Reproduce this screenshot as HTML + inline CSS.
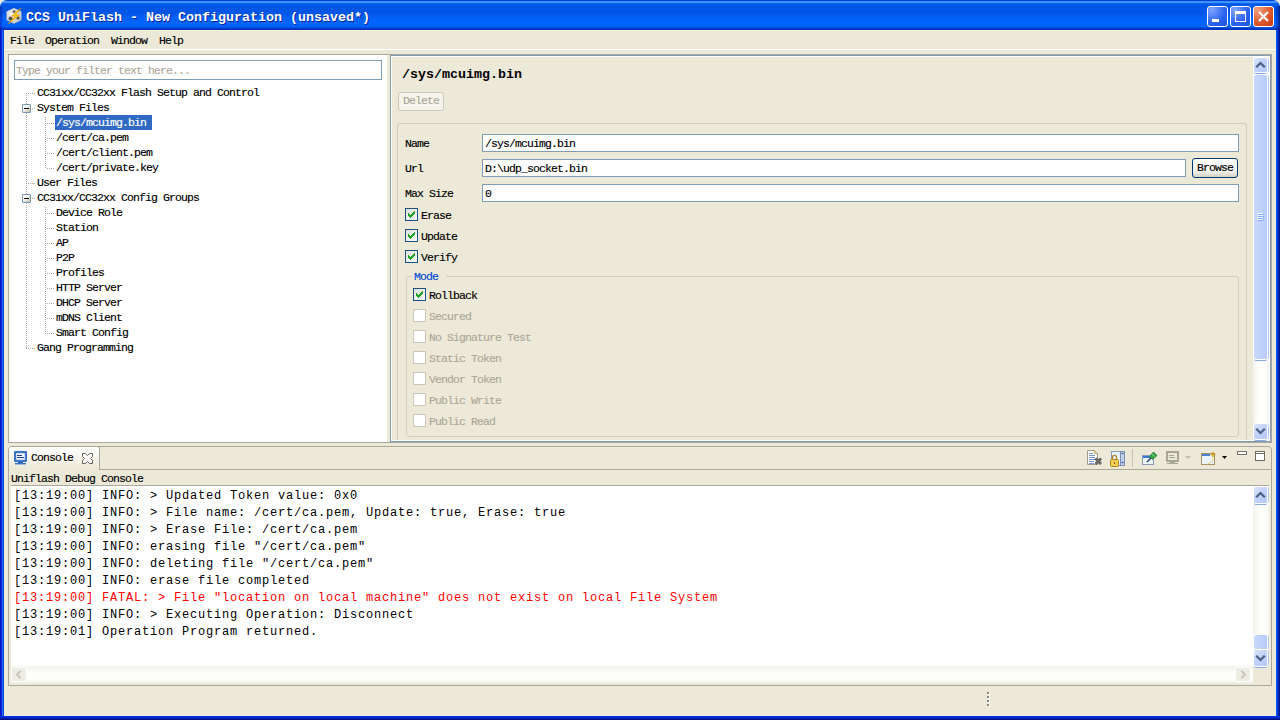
<!DOCTYPE html>
<html><head><meta charset="utf-8">
<style>
*{margin:0;padding:0;box-sizing:border-box}
html,body{width:1280px;height:720px;overflow:hidden;background:#ece9d8}
body{position:relative;font-family:"Liberation Mono",monospace;font-size:12px;color:#000}
.a{position:absolute}
.t{position:absolute;white-space:pre;font-family:"Liberation Mono",monospace;font-size:11.5px;letter-spacing:-0.9px;line-height:15px;height:15px;-webkit-text-stroke:0.15px currentColor;margin-top:-2px}
.c{position:absolute;white-space:pre;font-family:"Liberation Mono",monospace;font-size:12px;letter-spacing:0.8px;line-height:17px;left:14px}
</style></head><body>
<!-- window frame -->
<div class="a" style="left:0;top:0;width:8px;height:8px;background:#e8e8e4"></div>
<div class="a" style="left:1272px;top:0;width:8px;height:8px;background:#e8e8e4"></div>
<div class="a" style="left:0;top:0;width:1280px;height:30px;background:linear-gradient(180deg,#0040d8 0,#0040d8 1px,#3d95ff 1px,#3d95ff 3px,#0a6cff 3px,#0058e6 4px,#0054e4 13px,#005ef0 16px,#0066ff 22px,#0062fa 27px,#003dd0 28px,#0032b8 30px);border-radius:7px 7px 0 0"></div>
<div class="a" style="left:0;top:30px;width:4px;height:690px;background:linear-gradient(90deg,#0014c8 0 1px,#0024d8 1px 2px,#2c6cf4 2px 3px,#0042e4 3px)"></div>
<div class="a" style="left:1276px;top:30px;width:4px;height:690px;background:linear-gradient(90deg,#0050f8 0 1px,#0040e0 1px 2px,#002ab0 2px 3px,#001488 3px)"></div>
<div class="a" style="left:0;top:716px;width:1280px;height:4px;background:linear-gradient(180deg,#0036f0,#0026d0 40%,#001a98 70%,#000a70)"></div>
<div class="a" style="left:4px;top:30px;width:1272px;height:1px;background:#f8f0d0"></div>

<div class="a" style="left:1275px;top:6px;width:5px;height:24px;background:linear-gradient(90deg,rgba(0,10,110,0) 0,rgba(0,10,110,.25) 2px,rgba(0,10,110,.55) 4px,rgba(0,10,110,.7))"></div>
<div class="a" style="left:0;top:6px;width:3px;height:24px;background:linear-gradient(90deg,rgba(0,10,160,.45),rgba(0,10,160,.2) 2px,rgba(0,10,160,0))"></div>
<!-- title -->
<svg class="a" style="left:5px;top:6px" width="18" height="19"><defs><radialGradient id="cube" cx="0.4" cy="0.4" r="0.7"><stop offset="0" stop-color="#fafafa"/><stop offset="1" stop-color="#bcbcbc"/></radialGradient></defs><path d="M9 2L16.5 5.5V14L9 17.8L1.5 14V5.5Z" fill="url(#cube)"/><circle cx="5.5" cy="12.5" r="2" fill="#505050"/><circle cx="13" cy="12" r="1.8" fill="#606060"/><circle cx="9" cy="5.5" r="1.6" fill="#707070"/><path d="M16 2L6.5 10L10 10.6L3 18L14.5 9.2L11 8.5Z" fill="#f9c514" stroke="#e0a000" stroke-width="0.6"/></svg>

<div class="a" style="left:26px;top:8px;white-space:pre;font-family:'Liberation Mono',monospace;font-weight:bold;font-size:13.333px;line-height:20px;color:#fff;text-shadow:1px 1px 0 #0a1e9e">CCS UniFlash - New Configuration (unsaved*)</div>

<!-- title buttons -->
<div class="a" style="left:1207px;top:6px;width:21px;height:21px;border:1px solid #fff;border-radius:3px;background:radial-gradient(circle at 20% 15%,#7ea5ff,#2a63f0 60%,#1c4fd8)"></div>
<div class="a" style="left:1212px;top:19px;width:7px;height:3px;background:#fff"></div>
<div class="a" style="left:1230px;top:6px;width:21px;height:21px;border:1px solid #fff;border-radius:3px;background:radial-gradient(circle at 20% 15%,#7ea5ff,#2a63f0 60%,#1c4fd8)"></div>
<div class="a" style="left:1235px;top:11px;width:11px;height:11px;border:1px solid #fff;border-top-width:3px"></div>
<div class="a" style="left:1253px;top:6px;width:21px;height:21px;border:1px solid #fff;border-radius:3px;background:radial-gradient(circle at 20% 15%,#f0a080,#e05a30 55%,#c83a10)"></div>
<svg class="a" style="left:1253px;top:6px" width="21" height="21"><path d="M6 6 L15 15 M15 6 L6 15" stroke="#fff" stroke-width="2.2"/></svg>

<!-- menu -->
<div class="t" style="left:10px;top:35px">File</div>
<div class="t" style="left:45px;top:35px">Operation</div>
<div class="t" style="left:111px;top:35px">Window</div>
<div class="t" style="left:159px;top:35px">Help</div>
<div class="a" style="left:4px;top:49px;width:1272px;height:1px;background:#fff"></div>

<!-- left panel -->
<div class="a" style="left:8px;top:54px;width:1264px;height:389px;border:1px solid #aca899;background:#ece9d8"></div>
<div class="a" style="left:9px;top:55px;width:378px;height:387px;background:#fff"></div>
<div class="a" style="left:14px;top:60px;width:368px;height:20px;border:1px solid #7f9db9;background:#fff"></div>
<div class="t" style="left:16px;top:65px;color:#aca899">Type your filter text here...</div>

<div class="a" style="left:26px;top:93px;width:1px;height:256px;background:repeating-linear-gradient(180deg,#aca899 0 1px,transparent 1px 2px)"></div>
<div class="a" style="left:26px;top:93px;width:9px;height:1px;background:repeating-linear-gradient(90deg,#aca899 0 1px,transparent 1px 2px)"></div>
<div class="a" style="left:32px;top:108px;width:3px;height:1px;background:repeating-linear-gradient(90deg,#aca899 0 1px,transparent 1px 2px)"></div>
<div class="a" style="left:26px;top:183px;width:9px;height:1px;background:repeating-linear-gradient(90deg,#aca899 0 1px,transparent 1px 2px)"></div>
<div class="a" style="left:32px;top:198px;width:3px;height:1px;background:repeating-linear-gradient(90deg,#aca899 0 1px,transparent 1px 2px)"></div>
<div class="a" style="left:26px;top:348px;width:9px;height:1px;background:repeating-linear-gradient(90deg,#aca899 0 1px,transparent 1px 2px)"></div>
<div class="a" style="left:45px;top:117px;width:1px;height:52px;background:repeating-linear-gradient(180deg,#aca899 0 1px,transparent 1px 2px)"></div>
<div class="a" style="left:45px;top:207px;width:1px;height:127px;background:repeating-linear-gradient(180deg,#aca899 0 1px,transparent 1px 2px)"></div>
<div class="a" style="left:47px;top:123px;width:7px;height:1px;background:repeating-linear-gradient(90deg,#aca899 0 1px,transparent 1px 2px)"></div>
<div class="a" style="left:47px;top:138px;width:7px;height:1px;background:repeating-linear-gradient(90deg,#aca899 0 1px,transparent 1px 2px)"></div>
<div class="a" style="left:47px;top:153px;width:7px;height:1px;background:repeating-linear-gradient(90deg,#aca899 0 1px,transparent 1px 2px)"></div>
<div class="a" style="left:47px;top:168px;width:7px;height:1px;background:repeating-linear-gradient(90deg,#aca899 0 1px,transparent 1px 2px)"></div>
<div class="a" style="left:47px;top:213px;width:7px;height:1px;background:repeating-linear-gradient(90deg,#aca899 0 1px,transparent 1px 2px)"></div>
<div class="a" style="left:47px;top:228px;width:7px;height:1px;background:repeating-linear-gradient(90deg,#aca899 0 1px,transparent 1px 2px)"></div>
<div class="a" style="left:47px;top:243px;width:7px;height:1px;background:repeating-linear-gradient(90deg,#aca899 0 1px,transparent 1px 2px)"></div>
<div class="a" style="left:47px;top:258px;width:7px;height:1px;background:repeating-linear-gradient(90deg,#aca899 0 1px,transparent 1px 2px)"></div>
<div class="a" style="left:47px;top:273px;width:7px;height:1px;background:repeating-linear-gradient(90deg,#aca899 0 1px,transparent 1px 2px)"></div>
<div class="a" style="left:47px;top:288px;width:7px;height:1px;background:repeating-linear-gradient(90deg,#aca899 0 1px,transparent 1px 2px)"></div>
<div class="a" style="left:47px;top:303px;width:7px;height:1px;background:repeating-linear-gradient(90deg,#aca899 0 1px,transparent 1px 2px)"></div>
<div class="a" style="left:47px;top:318px;width:7px;height:1px;background:repeating-linear-gradient(90deg,#aca899 0 1px,transparent 1px 2px)"></div>
<div class="a" style="left:47px;top:333px;width:7px;height:1px;background:repeating-linear-gradient(90deg,#aca899 0 1px,transparent 1px 2px)"></div>
<div class="a" style="left:22px;top:104px;width:9px;height:9px;border:1px solid #7898b5;border-radius:1px;background:linear-gradient(135deg,#fff 30%,#c4bfa9)"></div>
<div class="a" style="left:24px;top:108px;width:5px;height:1px;background:#000"></div>
<div class="a" style="left:22px;top:194px;width:9px;height:9px;border:1px solid #7898b5;border-radius:1px;background:linear-gradient(135deg,#fff 30%,#c4bfa9)"></div>
<div class="a" style="left:24px;top:198px;width:5px;height:1px;background:#000"></div>
<div class="t" style="left:37px;top:87px">CC31xx/CC32xx Flash Setup and Control</div>
<div class="t" style="left:37px;top:102px">System Files</div>
<div class="a" style="left:55px;top:115px;width:97px;height:15px;background:#316ac5"></div>
<div class="t" style="left:56px;top:117px;color:#fff">/sys/mcuimg.bin</div>
<div class="t" style="left:56px;top:132px">/cert/ca.pem</div>
<div class="t" style="left:56px;top:147px">/cert/client.pem</div>
<div class="t" style="left:56px;top:162px">/cert/private.key</div>
<div class="t" style="left:37px;top:177px">User Files</div>
<div class="t" style="left:37px;top:192px">CC31xx/CC32xx Config Groups</div>
<div class="t" style="left:56px;top:207px">Device Role</div>
<div class="t" style="left:56px;top:222px">Station</div>
<div class="t" style="left:56px;top:237px">AP</div>
<div class="t" style="left:56px;top:252px">P2P</div>
<div class="t" style="left:56px;top:267px">Profiles</div>
<div class="t" style="left:56px;top:282px">HTTP Server</div>
<div class="t" style="left:56px;top:297px">DHCP Server</div>
<div class="t" style="left:56px;top:312px">mDNS Client</div>
<div class="t" style="left:56px;top:327px">Smart Config</div>
<div class="t" style="left:37px;top:342px">Gang Programming</div>
<!-- right panel -->
<div class="a" style="left:390px;top:55px;width:881px;height:387px;border:1px solid #7f9db9;background:#ece9d8;box-shadow:inset 1px 1px 0 #fff,inset -1px -1px 0 #fff;overflow:hidden"></div>

<svg width="0" height="0" style="position:absolute"><defs><linearGradient id="cg" x1="0" y1="0" x2="1" y2="1"><stop offset="0" stop-color="#dcdcd7"/><stop offset="1" stop-color="#fff"/></linearGradient></defs></svg>
<div class="a" style="left:402px;top:66px;white-space:pre;font-family:'Liberation Mono',monospace;font-weight:bold;font-size:13.333px;line-height:17px">/sys/mcuimg.bin</div>
<div class="a" style="left:398px;top:92px;width:46px;height:19px;border:1px solid #cac8bb;border-radius:3px;background:#f5f4ea"></div>
<div class="t" style="left:403px;top:95px;color:#aca899">Delete</div>
<div class="a" style="left:397px;top:123px;width:850px;height:317px;border:1px solid #d0d0bf;border-bottom:0;border-radius:3px 3px 0 0"></div>
<div class="t" style="left:405px;top:138px">Name</div>
<div class="a" style="left:482px;top:134px;width:757px;height:18px;border:1px solid #7f9db9;background:#fff"></div>
<div class="t" style="left:485px;top:138px">/sys/mcuimg.bin</div>
<div class="t" style="left:405px;top:163px">Url</div>
<div class="a" style="left:482px;top:159px;width:704px;height:18px;border:1px solid #7f9db9;background:#fff"></div>
<div class="t" style="left:485px;top:163px">D:\udp_socket.bin</div>
<div class="t" style="left:405px;top:188px">Max Size</div>
<div class="a" style="left:482px;top:184px;width:757px;height:18px;border:1px solid #7f9db9;background:#fff"></div>
<div class="t" style="left:485px;top:188px">0</div>
<div class="a" style="left:1192px;top:158px;width:46px;height:20px;border:1px solid #003c74;border-radius:3px;background:linear-gradient(180deg,#fff,#f0f0ea 70%,#d6d0c5)"></div>
<div class="t" style="left:1197px;top:162px">Browse</div>
<svg class="a" style="left:405px;top:208px" width="13" height="13"><rect x="0.5" y="0.5" width="12" height="12" fill="url(#cg)" stroke="#1c5180"/><path d="M3 5h1v1h1v1h1v-1h1v-1h1v-1h1v-1h1v3h-1v1h-1v1h-1v1h-1v1h-1v-1h-1v-1h-1z" fill="#21a121"/></svg>
<div class="t" style="left:421px;top:210px">Erase</div>
<svg class="a" style="left:405px;top:229px" width="13" height="13"><rect x="0.5" y="0.5" width="12" height="12" fill="url(#cg)" stroke="#1c5180"/><path d="M3 5h1v1h1v1h1v-1h1v-1h1v-1h1v-1h1v3h-1v1h-1v1h-1v1h-1v1h-1v-1h-1v-1h-1z" fill="#21a121"/></svg>
<div class="t" style="left:421px;top:231px">Update</div>
<svg class="a" style="left:405px;top:250px" width="13" height="13"><rect x="0.5" y="0.5" width="12" height="12" fill="url(#cg)" stroke="#1c5180"/><path d="M3 5h1v1h1v1h1v-1h1v-1h1v-1h1v-1h1v3h-1v1h-1v1h-1v1h-1v1h-1v-1h-1v-1h-1z" fill="#21a121"/></svg>
<div class="t" style="left:421px;top:252px">Verify</div>
<div class="a" style="left:406px;top:276px;width:833px;height:161px;border:1px solid #d0d0bf;border-radius:3px"></div>
<div class="a" style="left:412px;top:270px;width:34px;height:12px;background:#ece9d8"></div>
<div class="t" style="left:414px;top:271px;color:#0046d5">Mode</div>
<svg class="a" style="left:413px;top:288px" width="13" height="13"><rect x="0.5" y="0.5" width="12" height="12" fill="url(#cg)" stroke="#1c5180"/><path d="M3 5h1v1h1v1h1v-1h1v-1h1v-1h1v-1h1v3h-1v1h-1v1h-1v1h-1v1h-1v-1h-1v-1h-1z" fill="#21a121"/></svg>
<div class="t" style="left:429px;top:290px">Rollback</div>
<div class="a" style="left:413px;top:309px;width:13px;height:13px;border:1px solid #cac8bb;background:#fff"></div>
<div class="t" style="left:429px;top:311px;color:#aca899">Secured</div>
<div class="a" style="left:413px;top:330px;width:13px;height:13px;border:1px solid #cac8bb;background:#fff"></div>
<div class="t" style="left:429px;top:332px;color:#aca899">No Signature Test</div>
<div class="a" style="left:413px;top:351px;width:13px;height:13px;border:1px solid #cac8bb;background:#fff"></div>
<div class="t" style="left:429px;top:353px;color:#aca899">Static Token</div>
<div class="a" style="left:413px;top:372px;width:13px;height:13px;border:1px solid #cac8bb;background:#fff"></div>
<div class="t" style="left:429px;top:374px;color:#aca899">Vendor Token</div>
<div class="a" style="left:413px;top:393px;width:13px;height:13px;border:1px solid #cac8bb;background:#fff"></div>
<div class="t" style="left:429px;top:395px;color:#aca899">Public Write</div>
<div class="a" style="left:413px;top:414px;width:13px;height:13px;border:1px solid #cac8bb;background:#fff"></div>
<div class="t" style="left:429px;top:416px;color:#aca899">Public Read</div>
<div class="a" style="left:1253px;top:57px;width:16px;height:383px;background:linear-gradient(90deg,#f3f1ec,#fefefb 40%,#fefefb 80%,#f0efe8)"></div>
<div class="a" style="left:1254px;top:58px;width:13px;height:14px;background:linear-gradient(135deg,#dbe5fd,#c2d3fc 45%,#b3c8f8);border-radius:2px;box-shadow:0 0 0 1px #fff,0 2px 0 0 #8aa6dc,2px 0 0 0 #b4c4e4"></div>
<div class="a" style="left:1254px;top:75px;width:13px;height:284px;background:linear-gradient(90deg,#c9d8fc,#c1d2fc 50%,#b5caf8);border-radius:2px;box-shadow:0 0 0 1px #fff,0 2px 0 0 #8aa6dc,2px 0 0 0 #b4c4e4"></div>
<div class="a" style="left:1254px;top:424px;width:13px;height:15px;background:linear-gradient(135deg,#dbe5fd,#c2d3fc 45%,#b3c8f8);border-radius:2px;box-shadow:0 0 0 1px #fff,0 2px 0 0 #8aa6dc,2px 0 0 0 #b4c4e4"></div>
<!-- console panel -->
<div class="a" style="left:8px;top:446px;width:1264px;height:240px;border:1px solid #aca899;border-radius:4px 4px 0 0;background:#ece9d8"></div>

<div class="a" style="left:9px;top:447px;width:90px;height:22px;border-radius:3px 3px 0 0;background:linear-gradient(180deg,#fff,#f7f6f0 40%,#ece9d8)"></div>
<div class="a" style="left:99px;top:447px;width:1px;height:22px;background:#aca899"></div>
<div class="a" style="left:99px;top:469px;width:1172px;height:1px;background:#aca899"></div>
<svg class="a" style="left:14px;top:451px" width="14" height="14"><rect x="0" y="0" width="13" height="11" rx="1" fill="#3570cc"/><rect x="2" y="2" width="9" height="7" fill="#eaf6ff"/><rect x="2" y="2" width="9" height="7" fill="none" stroke="#7d8fb0" stroke-width="0.5"/><rect x="3" y="4" width="5" height="1" fill="#2a3e8c"/><rect x="3" y="6" width="7" height="1" fill="#2a3e8c"/><rect x="4" y="11" width="5" height="1" fill="#2f5fb0"/><rect x="1" y="12" width="11" height="1.4" fill="#3570cc"/></svg>
<div class="t" style="left:31px;top:452px">Console</div>
<svg class="a" style="left:82px;top:453px" width="12" height="12"><path d="M0.5 0.5h3l2 2 2-2h3v3l-2 2 2 2v3h-3l-2-2-2 2h-3v-3l2-2-2-2z" fill="#fff" stroke="#5f5d55"/></svg>
<svg class="a" style="left:1087px;top:450px" width="16" height="16"><path d="M0.5 0.5h7l3 3v11h-10z" fill="#fff" stroke="#a49c84"/><path d="M7.5 0.5v3h3" fill="#e8dcb0" stroke="#c0a868"/><path d="M2 3.5h4M2 5.5h6M2 7.5h6M2 9.5h6M2 11.5h5M2 13.5h5" stroke="#7c94cc"/><path d="M8.5 8.5l5.5 5.5M14 8.5l-5.5 5.5" stroke="#5a5a5a" stroke-width="2.6"/><path d="M8.5 8.5l5.5 5.5M14 8.5l-5.5 5.5" stroke="#787878" stroke-width="1"/></svg>
<svg class="a" style="left:1110px;top:451px" width="16" height="16"><rect x="1.5" y="0.5" width="13" height="14" fill="#e6f0fc" stroke="#8c9cb4"/><rect x="10.5" y="0.5" width="4" height="14" fill="#c4d2e8" stroke="#7c8cb0"/><path d="M11.5 2.5h2M12.5 1.8v1.4M11.5 11.5h2M12.5 10.8v1.4" stroke="#2850a0"/><rect x="0.5" y="8.5" width="8" height="7" rx="1" fill="#f4cc50" stroke="#b08820"/><path d="M2.5 8.5v-2.2a2 2 0 0 1 4 0v2.2" fill="none" stroke="#b08820" stroke-width="1.3"/><rect x="4" y="11" width="1" height="2" fill="#805c10"/></svg>
<div class="a" style="left:1132px;top:449px;width:1px;height:18px;background:#c5c2b2"></div>
<svg class="a" style="left:1142px;top:451px" width="16" height="16"><rect x="0.5" y="4.5" width="11" height="9" fill="#eaf4fc" stroke="#8a9ab8"/><rect x="1" y="5" width="10" height="2" fill="#3f78d0"/><path d="M5 11l4-4" stroke="#203060" stroke-width="1.2"/><path d="M7.5 5.5l4-4.5 3.5 3.5-4.5 4z" fill="#34a848" stroke="#1f7a30" stroke-width="0.8"/><path d="M10 3l2.5 2.5" stroke="#8ad890"/></svg>
<svg class="a" style="left:1166px;top:451px" width="14" height="14"><rect x="0" y="0" width="13" height="11" fill="#a8a698"/><rect x="2" y="2" width="9" height="7" fill="#ece9d8"/><rect x="3" y="4" width="5" height="1" fill="#a8a698"/><rect x="3" y="6" width="6" height="1" fill="#a8a698"/><rect x="4" y="11" width="5" height="1" fill="#a8a698"/><rect x="1" y="12" width="11" height="1" fill="#a8a698"/></svg>
<svg class="a" style="left:1185px;top:456px" width="7" height="4"><path d="M0 0h6l-3 3z" fill="#c0beb0"/></svg>
<svg class="a" style="left:1201px;top:451px" width="16" height="15"><rect x="0.5" y="2.5" width="13" height="11" fill="#eaf4fc" stroke="#a89060"/><rect x="1" y="3" width="8" height="2" fill="#4a7ed0"/><path d="M12 1v5M9.5 3.5h5" stroke="#d4a020" stroke-width="1.6"/><path d="M12 7q0 5-6 6" fill="none" stroke="#f0d070"/></svg>
<svg class="a" style="left:1222px;top:456px" width="6" height="4"><path d="M0 0h5l-2.5 3z" fill="#000"/></svg>
<div class="a" style="left:1237px;top:451px;width:10px;height:4px;border:1px solid #787468;background:#fff"></div>
<div class="a" style="left:1255px;top:451px;width:10px;height:10px;border:1px solid #6f6b60;background:#fff;box-shadow:inset 0 1px 0 #fff,inset 0 2px 0 #6f6b60"></div>
<div class="t" style="left:11px;top:473px">Uniflash Debug Console</div>
<div class="a" style="left:11px;top:485px;width:1258px;height:1px;background:#aca899"></div>
<div class="a" style="left:11px;top:486px;width:1242px;height:180px;background:#fff"></div>
<div class="c" style="top:488px;color:#000">[13:19:00] INFO: > Updated Token value: 0x0</div>
<div class="c" style="top:505px;color:#000">[13:19:00] INFO: > File name: /cert/ca.pem, Update: true, Erase: true</div>
<div class="c" style="top:522px;color:#000">[13:19:00] INFO: > Erase File: /cert/ca.pem</div>
<div class="c" style="top:539px;color:#000">[13:19:00] INFO: erasing file &quot;/cert/ca.pem&quot;</div>
<div class="c" style="top:556px;color:#000">[13:19:00] INFO: deleting file &quot;/cert/ca.pem&quot;</div>
<div class="c" style="top:573px;color:#000">[13:19:00] INFO: erase file completed</div>
<div class="c" style="top:590px;color:#f00">[13:19:00] FATAL: > File &quot;location on local machine&quot; does not exist on local File System</div>
<div class="c" style="top:607px;color:#000">[13:19:00] INFO: > Executing Operation: Disconnect</div>
<div class="c" style="top:624px;color:#000">[13:19:01] Operation Program returned.</div>
<div class="a" style="left:1253px;top:486px;width:17px;height:180px;background:linear-gradient(90deg,#f3f1ec,#fefefb 40%,#fefefb 80%,#f0efe8)"></div>
<div class="a" style="left:1254px;top:487px;width:13px;height:16px;background:linear-gradient(135deg,#dbe5fd,#c2d3fc 45%,#b3c8f8);border-radius:2px;box-shadow:0 0 0 1px #fff,0 2px 0 0 #8aa6dc,2px 0 0 0 #b4c4e4"></div>
<div class="a" style="left:1254px;top:635px;width:13px;height:14px;background:linear-gradient(90deg,#c9d8fc,#c1d2fc 50%,#b5caf8);border-radius:2px;box-shadow:0 0 0 1px #fff,0 2px 0 0 #8aa6dc,2px 0 0 0 #b4c4e4"></div>
<div class="a" style="left:1254px;top:650px;width:13px;height:16px;background:linear-gradient(135deg,#dbe5fd,#c2d3fc 45%,#b3c8f8);border-radius:2px;box-shadow:0 0 0 1px #fff,0 2px 0 0 #8aa6dc,2px 0 0 0 #b4c4e4"></div>
<div class="a" style="left:11px;top:666px;width:1242px;height:17px;background:linear-gradient(180deg,#f3f1ec,#fefefb 40%,#fefefb 80%,#f0efe8)"></div>
<div class="a" style="left:11px;top:667px;width:16px;height:15px;border:1px solid #fff;border-radius:2px;background:#eeede5"></div>
<div class="a" style="left:1235px;top:667px;width:16px;height:15px;border:1px solid #fff;border-radius:2px;background:#eeede5"></div>
<svg class="a" style="left:15px;top:670px" width="8" height="9"><path d="M5.5 1L2 4.5L5.5 8" fill="none" stroke="#c9c7ba" stroke-width="2"/></svg>
<svg class="a" style="left:1239px;top:670px" width="8" height="9"><path d="M2.5 1L6 4.5L2.5 8" fill="none" stroke="#c9c7ba" stroke-width="2"/></svg>
<div class="a" style="left:987px;top:692px;width:2px;height:2px;background:#8c8a80;box-shadow:1px 1px 0 #fff"></div>
<div class="a" style="left:987px;top:696px;width:2px;height:2px;background:#8c8a80;box-shadow:1px 1px 0 #fff"></div>
<div class="a" style="left:987px;top:700px;width:2px;height:2px;background:#8c8a80;box-shadow:1px 1px 0 #fff"></div>
<div class="a" style="left:987px;top:704px;width:2px;height:2px;background:#8c8a80;box-shadow:1px 1px 0 #fff"></div>
<svg class="a" style="left:1255px;top:61px" width="11" height="8"><path d="M1.2 6.2L5.5 2L9.8 6.2" fill="none" stroke="#4d6185" stroke-width="2.3"/></svg>
<svg class="a" style="left:1255px;top:427px" width="11" height="8"><path d="M1.2 1.8L5.5 6L9.8 1.8" fill="none" stroke="#4d6185" stroke-width="2.3"/></svg>
<svg class="a" style="left:1255px;top:491px" width="11" height="8"><path d="M1.2 6.2L5.5 2L9.8 6.2" fill="none" stroke="#4d6185" stroke-width="2.3"/></svg>
<svg class="a" style="left:1255px;top:654px" width="11" height="8"><path d="M1.2 1.8L5.5 6L9.8 1.8" fill="none" stroke="#4d6185" stroke-width="2.3"/></svg>
<div class="a" style="left:1257px;top:213px;width:6px;height:1px;background:#eef4fe"></div>
<div class="a" style="left:1258px;top:214px;width:6px;height:1px;background:#8cb0f8"></div>
<div class="a" style="left:1257px;top:215px;width:6px;height:1px;background:#eef4fe"></div>
<div class="a" style="left:1258px;top:216px;width:6px;height:1px;background:#8cb0f8"></div>
<div class="a" style="left:1257px;top:217px;width:6px;height:1px;background:#eef4fe"></div>
<div class="a" style="left:1258px;top:218px;width:6px;height:1px;background:#8cb0f8"></div>
<div class="a" style="left:1257px;top:219px;width:6px;height:1px;background:#eef4fe"></div>
<div class="a" style="left:1258px;top:220px;width:6px;height:1px;background:#8cb0f8"></div>
<!-- status -->
</body></html>
